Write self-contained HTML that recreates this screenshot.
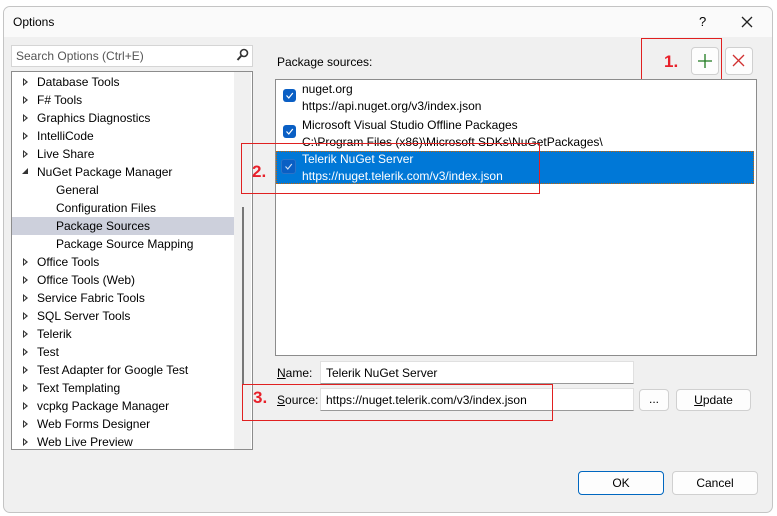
<!DOCTYPE html>
<html><head><style>
body{margin:0;width:777px;height:516px;background:#fff;font-family:"Liberation Sans",sans-serif;font-size:12px;color:#000;position:relative;overflow:hidden}
.a{position:absolute}
.win{left:3px;top:6px;width:768px;height:505px;border:1px solid #c4c4c4;border-radius:7px;background:#f0f0f0;overflow:hidden}
.title{left:0;top:0;width:768px;height:30px;background:#fafafa}
.t{position:absolute;white-space:nowrap}
.tri{position:absolute;width:0;height:0;border-top:4px solid transparent;border-bottom:4px solid transparent;border-left:5px solid #333}
.tri:after{content:"";position:absolute;left:-4px;top:-2px;border-top:2px solid transparent;border-bottom:2px solid transparent;border-left:2px solid #fff}
.cb{position:absolute;width:13px;height:13px;background:#0a5fc4;border-radius:3px}
.cb svg{position:absolute;left:2px;top:2px}
.btn{position:absolute;background:#fdfdfd;border:1px solid #d0d0d0;border-radius:4px;text-align:center}
.red{position:absolute;border:1px solid #e02020}
.num{position:absolute;color:#e8202a;font-weight:bold;font-size:17px}
.inp{position:absolute;background:#fff;border-bottom:1px solid #888;}
</style></head><body>
<div class="a win">
  <div class="a title"></div>
  <div class="t" style="left:9px;top:8px">Options</div>
  <div class="t" style="left:695px;top:7px;font-size:13px">?</div>
  <svg class="a" style="left:737px;top:9px" width="12" height="12"><path d="M1 1L11 11M11 1L1 11" stroke="#222" stroke-width="1.3"/></svg>
</div>
<!-- search -->
<div class="a" style="left:11px;top:45px;width:240px;height:20px;background:#fff;border:1px solid #d5d5d5"></div>
<div class="t" style="left:16px;top:49px;color:#555">Search Options (Ctrl+E)</div>
<svg class="a" style="left:236px;top:48px" width="13" height="14"><circle cx="8" cy="5" r="3.5" fill="none" stroke="#333" stroke-width="1.6"/><path d="M5.5 7.5L1.5 12" stroke="#333" stroke-width="2"/></svg>
<!-- tree -->
<div class="a" style="left:11px;top:71px;width:240px;height:377px;background:#fff;border:1px solid #8c8c8c"></div>
<div class="a" style="left:234px;top:72px;width:17px;height:377px;background:#f0f0f0"></div>
<div class="a" style="left:242px;top:207px;width:2px;height:178px;background:#777"></div>
<div class="a" style="left:12px;top:217px;width:222px;height:18px;background:#cdd0dc"></div>
<div id="tree"></div>
<!-- right -->
<div class="t" style="left:277px;top:55px">Package sources:</div>
<div class="btn" style="left:691px;top:47px;width:26px;height:26px"></div>
<svg class="a" style="left:697px;top:53px" width="16" height="16"><path d="M8 1V15M1 8H15" stroke="#1f7a1f" stroke-width="1.3"/></svg>
<div class="btn" style="left:725px;top:47px;width:26px;height:26px"></div>
<svg class="a" style="left:732px;top:54px" width="13" height="13"><path d="M1 1L12 12M12 1L1 12" stroke="#d03030" stroke-width="1.3"/></svg>
<div class="red" style="left:641px;top:38px;width:79px;height:44px"></div>
<div class="num" style="left:664px;top:52px">1.</div>

<div class="a" style="left:275px;top:79px;width:480px;height:275px;background:#fff;border:1px solid #8c8c8c"></div>
<div class="cb" style="left:283px;top:89px"><svg width="9" height="9"><path d="M1.5 4.5L3.8 7L7.8 2" stroke="#fff" stroke-width="1.2" fill="none"/></svg></div>
<div class="t" style="left:302px;top:82px">nuget.org</div>
<div class="t" style="left:302px;top:99px">https://api.nuget.org/v3/index.json</div>
<div class="cb" style="left:283px;top:125px"><svg width="9" height="9"><path d="M1.5 4.5L3.8 7L7.8 2" stroke="#fff" stroke-width="1.2" fill="none"/></svg></div>
<div class="t" style="left:302px;top:118px">Microsoft Visual Studio Offline Packages</div>
<div class="t" style="left:302px;top:135px">C:\Program Files (x86)\Microsoft SDKs\NuGetPackages\</div>
<div class="a" style="left:276px;top:151px;width:478px;height:33px;background:#0078d7;outline:1px dotted #c86400;outline-offset:-1px"></div>
<div class="cb" style="left:281px;top:159px;background:#0a5fc4;border:1px solid #2b73c8"><svg width="9" height="9"><path d="M1.5 4.5L3.8 7L7.8 2" stroke="#cfe0f5" stroke-width="1.1" fill="none"/></svg></div>
<div class="t" style="left:302px;top:152px;color:#fff">Telerik NuGet Server</div>
<div class="t" style="left:302px;top:169px;color:#fff">https://nuget.telerik.com/v3/index.json</div>
<div class="red" style="left:241px;top:143px;width:297px;height:49px"></div>
<div class="num" style="left:252px;top:162px">2.</div>

<div class="t" style="left:277px;top:366px"><u>N</u>ame:</div>
<div class="inp" style="left:320px;top:361px;width:312px;height:21px;border:1px solid #e0e0e0;border-bottom-color:#999"></div>
<div class="t" style="left:326px;top:366px">Telerik NuGet Server</div>
<div class="t" style="left:277px;top:393px"><u>S</u>ource:</div>
<div class="inp" style="left:320px;top:388px;width:312px;height:21px;border:1px solid #e0e0e0;border-bottom-color:#999"></div>
<div class="t" style="left:326px;top:393px">https://nuget.telerik.com/v3/index.json</div>
<div class="btn" style="left:639px;top:389px;width:28px;height:20px;line-height:19px">...</div>
<div class="btn" style="left:676px;top:389px;width:73px;height:20px;line-height:20px"><u>U</u>pdate</div>
<div class="red" style="left:242px;top:384px;width:309px;height:35px"></div>
<div class="num" style="left:253px;top:388px">3.</div>

<div class="btn" style="left:578px;top:471px;width:84px;height:22px;line-height:22px;border-color:#0067c0">OK</div>
<div class="btn" style="left:672px;top:471px;width:84px;height:22px;line-height:22px">Cancel</div>
<script>
var items=[["Database Tools",0,1],["F# Tools",0,1],["Graphics Diagnostics",0,1],["IntelliCode",0,1],["Live Share",0,1],["NuGet Package Manager",0,2],["General",1],["Configuration Files",1],["Package Sources",1],["Package Source Mapping",1],["Office Tools",0,1],["Office Tools (Web)",0,1],["Service Fabric Tools",0,1],["SQL Server Tools",0,1],["Telerik",0,1],["Test",0,1],["Test Adapter for Google Test",0,1],["Text Templating",0,1],["vcpkg Package Manager",0,1],["Web Forms Designer",0,1],["Web Live Preview",0,1]];
var h="";items.forEach(function(it,i){var y=75+i*18;
if(it[2]==1)h+='<div class="tri" style="left:23px;top:'+(y+3)+'px"></div>';
if(it[2]==2)h+='<svg class="a" style="left:22px;top:'+(y+3)+'px" width="7" height="7"><path d="M6 0V6H0Z" fill="#333"/></svg>';
h+='<div class="t" style="left:'+(it[1]?56:37)+'px;top:'+y+'px">'+it[0]+'</div>';});
document.getElementById("tree").innerHTML=h;
</script>
</body></html>
